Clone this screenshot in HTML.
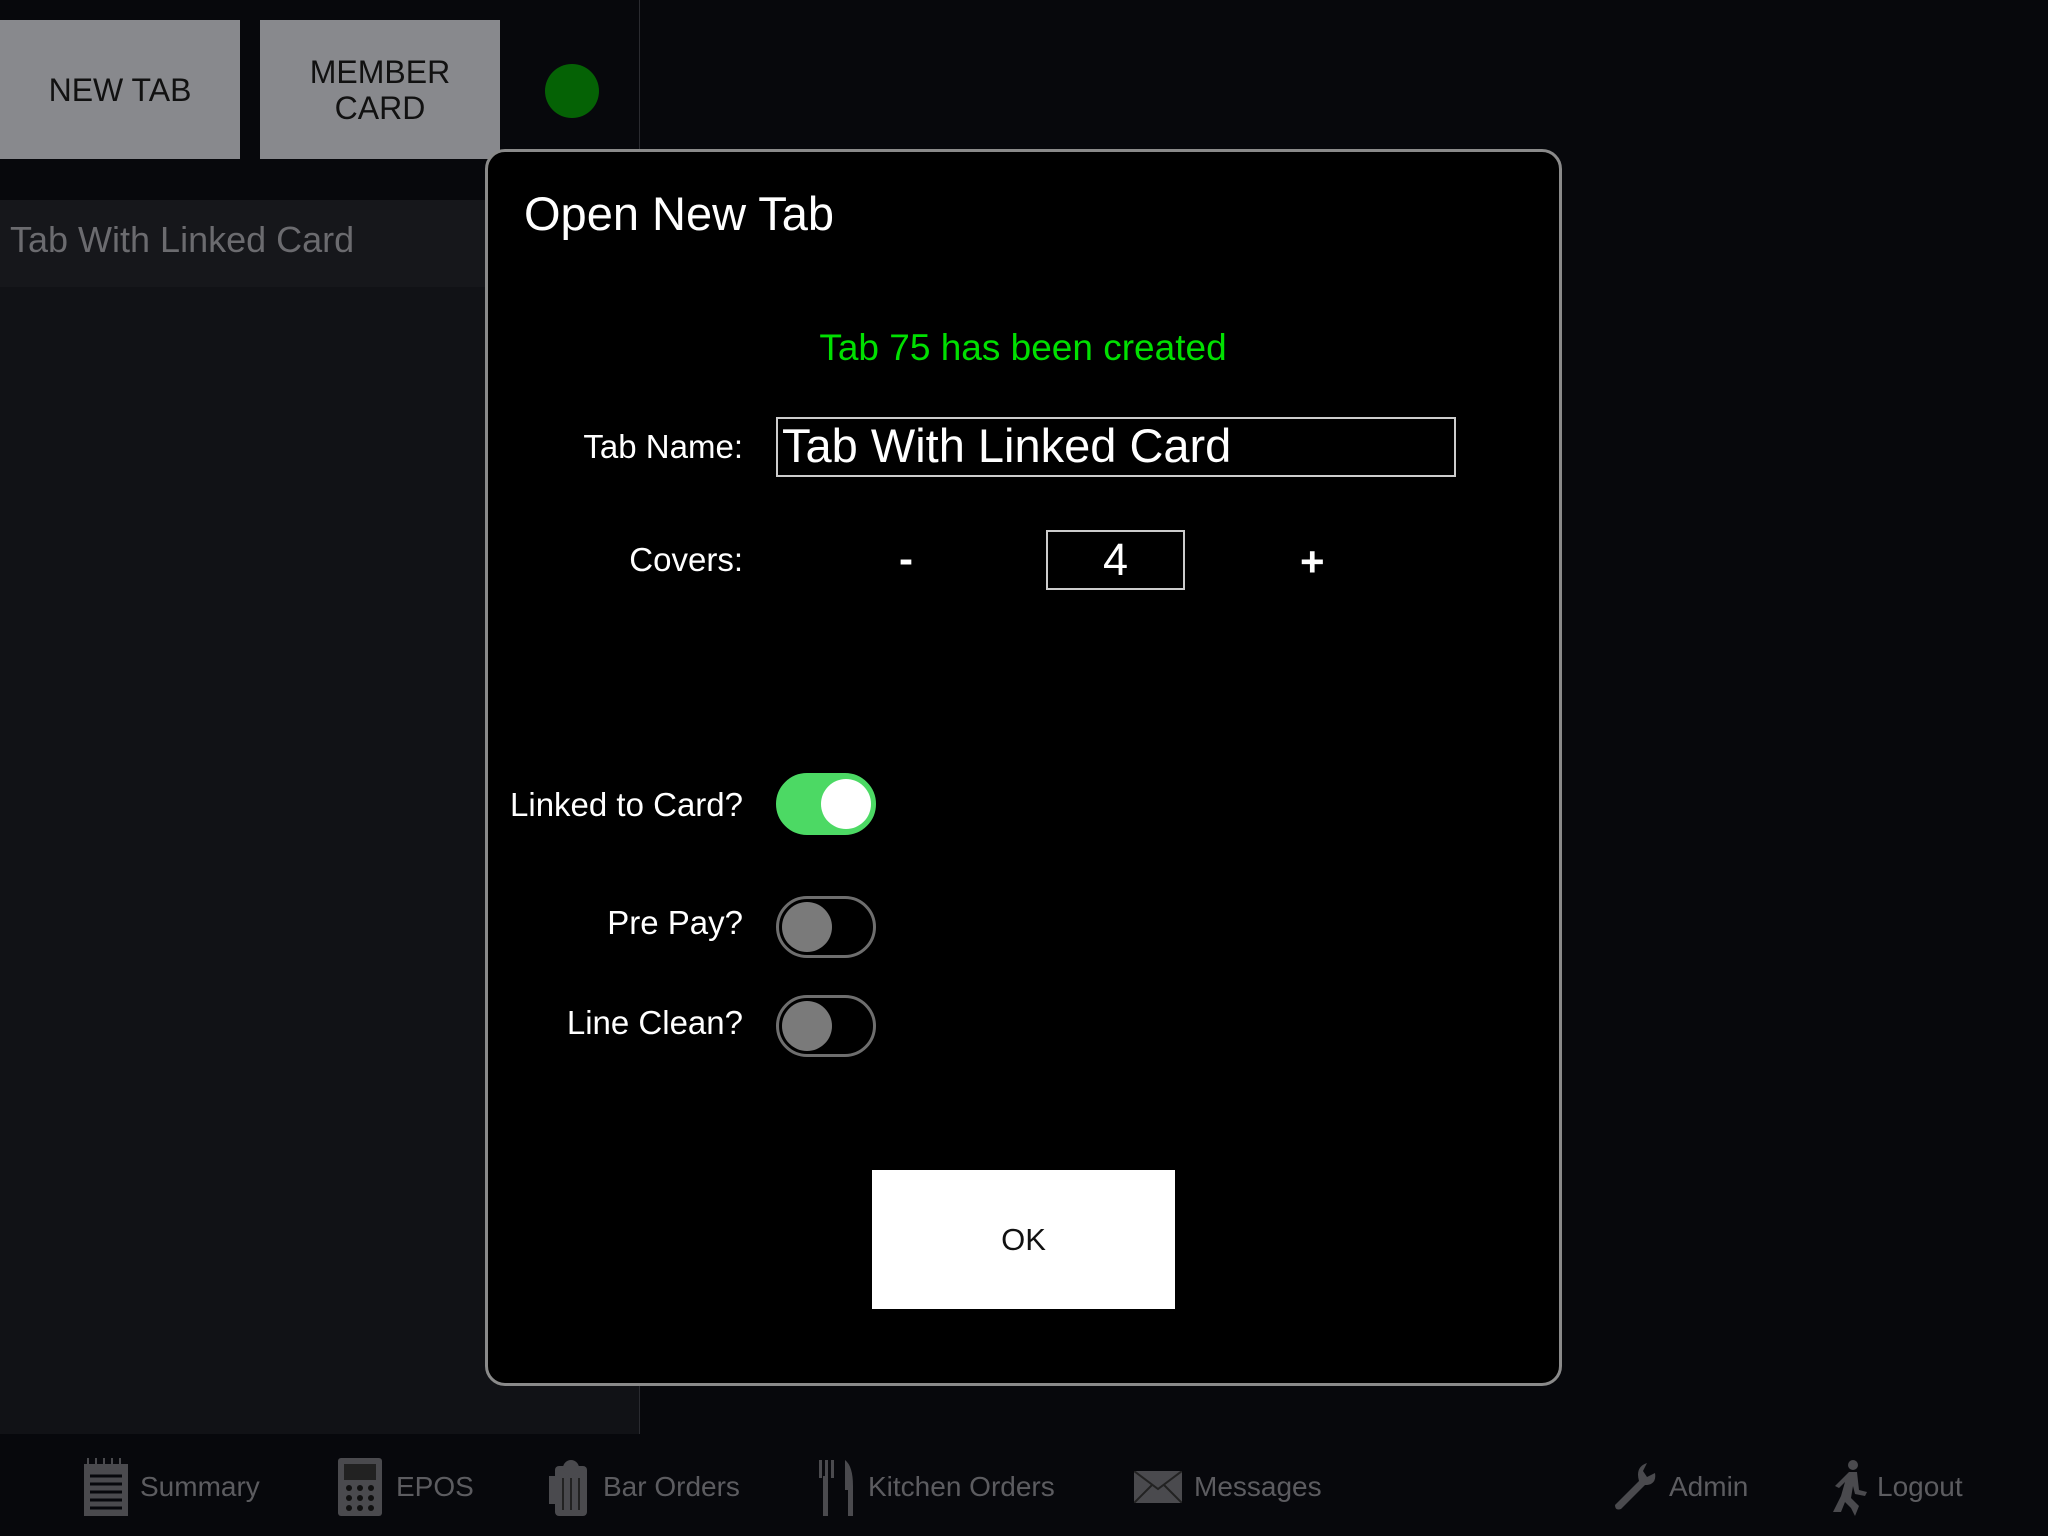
<!DOCTYPE html>
<html><head><meta charset="utf-8"><style>
*{margin:0;padding:0;box-sizing:border-box}
body{width:2048px;height:1536px;background:#07080c;position:relative;overflow:hidden;font-family:"Liberation Sans",sans-serif}
.a{position:absolute}
.btn{background:#88898d;color:#111;font-size:32px;display:flex;align-items:center;justify-content:center;text-align:center;line-height:36px}
.lbl{color:#fff;font-size:33px;text-align:right;width:400px;left:343px;line-height:40px}
.tg{left:776px;width:100px;height:62px;border-radius:31px;border:3px solid #6e6e6e;background:#000}
.tg .k{position:absolute;top:3px;left:3px;width:50px;height:50px;border-radius:50%;background:#7a7a7a}
.nav{color:#5c5c60;font-size:28px;top:1470px;line-height:34px}
.ic{fill:#4a4a4e}
</style></head><body>
<div class="a" style="left:0;top:0;width:640px;height:1434px;background:#111216"></div>
<div class="a" style="left:0;top:0;width:640px;height:200px;background:#07080c"></div>
<div class="a" style="left:639px;top:0;width:1px;height:1434px;background:#2a2b30"></div>
<div class="a btn" style="left:0;top:20px;width:240px;height:139px">NEW TAB</div>
<div class="a btn" style="left:260px;top:20px;width:240px;height:139px">MEMBER<br>CARD</div>
<div class="a" style="left:545px;top:64px;width:54px;height:54px;border-radius:50%;background:#056205"></div>
<div class="a" style="left:0;top:200px;width:640px;height:87px;background:#16171b"></div>
<div class="a" style="left:10px;top:218px;color:#6b6b6f;font-size:36px;line-height:44px">Tab With Linked Card</div>

<div class="a" style="left:485px;top:149px;width:1077px;height:1237px;background:#000;border:3px solid #8a8a8a;border-radius:20px"></div>
<div class="a" style="left:524px;top:186px;color:#fff;font-size:47px;line-height:56px">Open New Tab</div>
<div class="a" style="left:623px;top:326px;width:800px;text-align:center;color:#00e000;font-size:37px;line-height:44px">Tab 75 has been created</div>
<div class="a lbl" style="top:427px">Tab Name:</div>
<div class="a" style="left:776px;top:417px;width:680px;height:60px;border:2px solid #ccc;color:#fff;font-size:47px;line-height:54px;padding-left:4px">Tab With Linked Card</div>
<div class="a lbl" style="top:540px">Covers:</div>
<div class="a" style="left:899px;top:535px;color:#fff;font-size:42px;font-weight:bold">-</div>
<div class="a" style="left:1046px;top:530px;width:139px;height:60px;border:2px solid #ccc;color:#fff;font-size:45px;line-height:56px;text-align:center">4</div>
<div class="a" style="left:1300px;top:538px;color:#fff;font-size:42px;font-weight:bold">+</div>

<div class="a lbl" style="top:785px">Linked to Card?</div>
<div class="a tg" style="top:773px;background:#4cd964;border-color:#4cd964"><div class="k" style="left:42px;background:#fff"></div></div>
<div class="a lbl" style="top:903px">Pre Pay?</div>
<div class="a tg" style="top:896px"><div class="k"></div></div>
<div class="a lbl" style="top:1003px">Line Clean?</div>
<div class="a tg" style="top:995px"><div class="k"></div></div>

<div class="a" style="left:872px;top:1170px;width:303px;height:139px;background:#fff;color:#111;font-size:31px;display:flex;align-items:center;justify-content:center">OK</div>

<svg class="a" style="left:84px;top:1458px" width="44" height="58"><rect class="ic" x="0" y="6" width="44" height="52"/><g stroke="#07080c" stroke-width="3"><line x1="6" y1="18" x2="38" y2="18"/><line x1="6" y1="26" x2="38" y2="26"/><line x1="6" y1="34" x2="38" y2="34"/><line x1="6" y1="42" x2="38" y2="42"/><line x1="6" y1="50" x2="38" y2="50"/></g><g stroke="#4a4a4e" stroke-width="2"><line x1="4" y1="0" x2="4" y2="6"/><line x1="12" y1="0" x2="12" y2="6"/><line x1="20" y1="0" x2="20" y2="6"/><line x1="28" y1="0" x2="28" y2="6"/><line x1="36" y1="0" x2="36" y2="6"/></g></svg>
<div class="a nav" style="left:140px">Summary</div>
<svg class="a" style="left:338px;top:1458px" width="44" height="58"><rect class="ic" width="44" height="58" rx="3"/><rect x="6" y="6" width="32" height="16" fill="#222"/><g fill="#111"><circle cx="11" cy="30" r="3"/><circle cx="22" cy="30" r="3"/><circle cx="33" cy="30" r="3"/><circle cx="11" cy="40" r="3"/><circle cx="22" cy="40" r="3"/><circle cx="33" cy="40" r="3"/><circle cx="11" cy="50" r="3"/><circle cx="22" cy="50" r="3"/><circle cx="33" cy="50" r="3"/></g></svg>
<div class="a nav" style="left:396px">EPOS</div>
<svg class="a" style="left:549px;top:1460px" width="44" height="56"><rect class="ic" x="6" y="6" width="32" height="50" rx="4"/><rect class="ic" x="0" y="16" width="8" height="28"/><circle class="ic" cx="22" cy="8" r="8"/><g stroke="#222" stroke-width="2"><line x1="14" y1="18" x2="14" y2="50"/><line x1="22" y1="18" x2="22" y2="50"/><line x1="30" y1="18" x2="30" y2="50"/></g></svg>
<div class="a nav" style="left:603px">Bar Orders</div>
<svg class="a" style="left:819px;top:1460px" width="40" height="56"><g class="ic"><rect x="0" y="0" width="3" height="18"/><rect x="6" y="0" width="3" height="18"/><rect x="12" y="0" width="3" height="18"/><rect x="4" y="16" width="5" height="40"/><path d="M26 0 Q34 6 34 26 L34 56 L29 56 L29 30 L26 30 Z"/></g></svg>
<div class="a nav" style="left:868px">Kitchen Orders</div>
<svg class="a" style="left:1134px;top:1471px" width="48" height="32"><rect class="ic" width="48" height="32"/><path d="M0 0 L24 18 L48 0 M0 32 L18 14 M48 32 L30 14" stroke="#222" stroke-width="2" fill="none"/></svg>
<div class="a nav" style="left:1194px">Messages</div>
<svg class="a" style="left:1613px;top:1463px" width="44" height="48"><path class="ic" d="M34 0 L30 8 L34 14 L42 10 Q44 22 32 22 L8 46 Q2 48 2 42 L26 18 Q22 4 34 0 Z"/></svg>
<div class="a nav" style="left:1669px">Admin</div>
<svg class="a" style="left:1829px;top:1460px" width="40" height="56"><g class="ic"><circle cx="24" cy="5" r="5"/><path d="M20 12 L28 12 L30 30 L38 32 L36 36 L26 34 L24 26 L22 38 L30 46 L26 56 L22 48 L16 42 L12 52 L4 52 L12 36 L16 22 L10 28 L6 26 Z"/></g></svg>
<div class="a nav" style="left:1877px">Logout</div>
</body></html>
